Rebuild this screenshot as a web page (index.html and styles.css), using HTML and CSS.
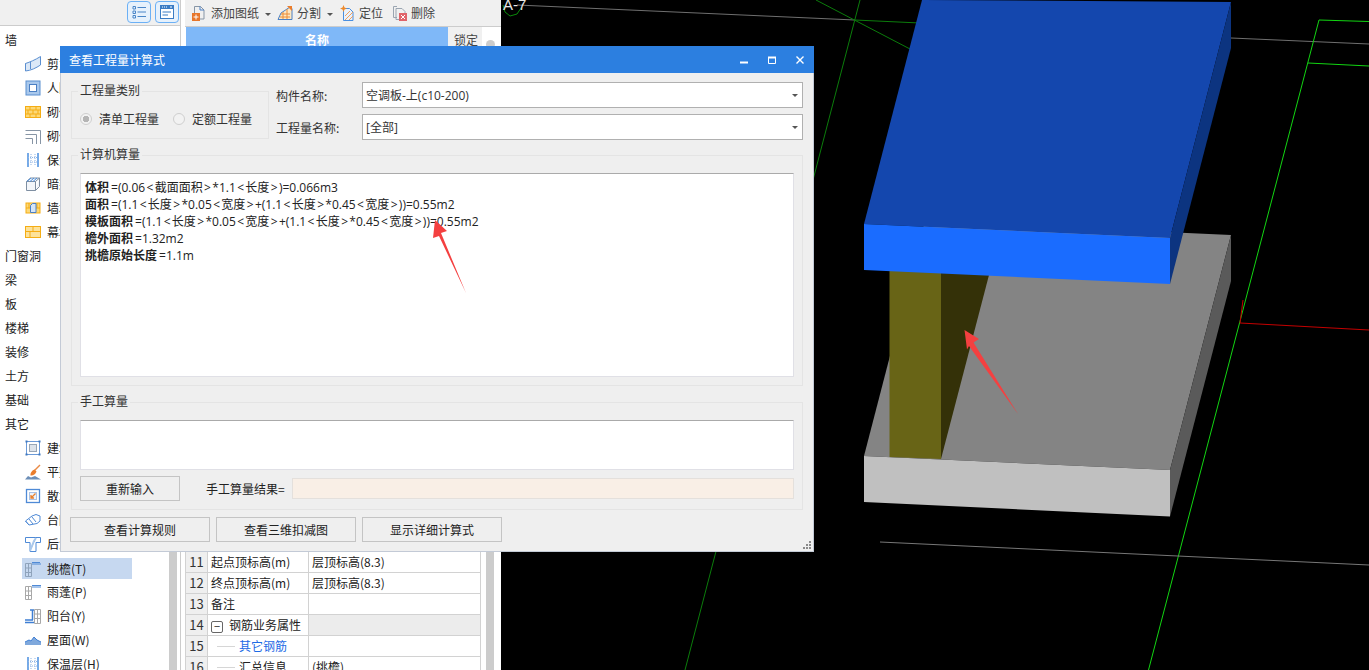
FILE: index.html
```html
<!DOCTYPE html>
<html lang="zh-CN">
<head>
<meta charset="utf-8">
<title>查看工程量计算式</title>
<link rel="stylesheet" href="styles.css">
</head>
<body>
<div class="app">
  <aside class="left">
    <section class="tree-col">
      <div class="tree-bar">
        <span class="tool-btn"><svg viewBox="0 0 16 16" width="16" height="16"><path d="M2 2.5h2.5v2.500H2zM2 7h2.500v2.500H2zM2 11.500h2.500V14H2z" fill="none" stroke="#4a86c8"/><path d="M6.500 3.500H15M6.500 8H15M6.500 12.500H15" stroke="#4a86c8"/></svg></span>
        <span class="tool-btn"><svg viewBox="0 0 16 16" width="18" height="16"><rect x="1.500" y="1.500" width="13" height="13" fill="#fff" stroke="#3b7cc4"/><path d="M1 1h14v4H1z" fill="#3b7cc4"/><path d="M3 3h1M5 3h1M7 3h1M11 3h2" stroke="#fff"/><path d="M3.500 8H12M3.500 11H9" stroke="#3b7cc4"/></svg></span>
      </div>
      <div class="tree-wrap">
        <ul class="tree">
          <li class="top">墙</li>
          <li class="leaf"><svg class="ic" viewBox="0 0 16 16"><path d="M.5 7.500C5 6 10 4 15.500.5V9C11 12 6 14.500.5 15z" fill="#dbe8f7" stroke="#5b8fd0"/><path d="M.5 7.500V15M5.500 6V13" stroke="#5b8fd0"/></svg>剪力墙(Q)</li>
          <li class="leaf"><svg class="ic" viewBox="0 0 16 16"><rect x="1" y="1" width="14" height="14" fill="#a9c8ec" stroke="#5b8fd0"/><rect x="4.500" y="4.500" width="7" height="7" fill="#fff" stroke="#4a7fc4"/></svg>人防门框墙(RF)</li>
          <li class="leaf"><svg class="ic" viewBox="0 0 16 16"><rect x=".5" y="2.500" width="15" height="11" fill="#fcd877" stroke="#f5ad14"/><path d="M.5 6h15M.5 10h15M5 2.500V6M11 2.500V6M8 6v4M3 6v4M13 6v4M5 10v3.500M11 10v3.500" stroke="#f5ad14"/></svg>砌体墙(Q)</li>
          <li class="leaf"><svg class="ic" viewBox="0 0 16 16"><path d="M.5 2.500h15V16M.5 6.500h11V16M.5 10.500h7V16" fill="none" stroke="#8795a5"/></svg>砌体加筋(Y)</li>
          <li class="leaf"><svg class="ic" viewBox="0 0 16 16"><path d="M3 1v14M13 1v14" stroke="#4a8fe0" stroke-width="1.500"/><path d="M6 2v12M10 2v12M3 5.500h10M3 10h10" stroke="#8fb4e4" stroke-dasharray="1 1"/></svg>保温墙(Q)</li>
          <li class="leaf"><svg class="ic" viewBox="0 0 16 16"><path d="M1.500 5.500l4-3.500h9l-4 3.500zM1.500 5.500v9h9v-9M10.500 14.500l4-4V2" fill="#f3f6fa" stroke="#7f8fa2"/><path d="M6 2l-4 3.500M9 2L5 5.500M12 2L8 5.500" stroke="#4a8fe0"/></svg>暗梁(A)</li>
          <li class="leaf"><svg class="ic" viewBox="0 0 16 16"><rect x="1" y="3" width="14" height="10" fill="#fcd877" stroke="#f5ad14"/><path d="M1 8h14M4 3v5M12 3v5" stroke="#f5ad14"/><path d="M5.500 5.500l2-2h3.500v9H5.500z" fill="#d6e5f7" stroke="#4a7fc4"/></svg>墙垛(E)</li>
          <li class="leaf"><svg class="ic" viewBox="0 0 16 16"><rect x=".5" y="2.500" width="15" height="11" fill="#fde29a" stroke="#f5ad14"/><path d="M.5 7.500h15M8 2.500V7.500M5 7.500v6" stroke="#f5ad14"/></svg>幕墙(Q)</li>
          <li class="top">门窗洞</li>
          <li class="top">梁</li>
          <li class="top">板</li>
          <li class="top">楼梯</li>
          <li class="top">装修</li>
          <li class="top">土方</li>
          <li class="top">基础</li>
          <li class="top">其它</li>
          <li class="leaf"><svg class="ic" viewBox="0 0 16 16"><rect x="1.500" y="1.500" width="13" height="13" fill="#fff" stroke="#6b9ad8"/><rect x="4.500" y="4.500" width="7" height="7" fill="#dde3ea" stroke="#98a6b6"/><path d="M.5.500h2v2h-2zM13.500.500h2v2h-2zM.5 13.500h2v2h-2zM13.500 13.500h2v2h-2z" fill="#3f77bd"/></svg>建筑面积(P)</li>
          <li class="leaf"><svg class="ic" viewBox="0 0 16 16"><path d="M15 1l-6 6" stroke="#e98a45" stroke-width="1.500"/><path d="M9.500 5.500l2 2c-1 3-4 4.500-6 4 -.5-2 1-5 4-6z" fill="#ea7d2c"/><path d="M0 15.500l3-3.500 3 1.500 4-1.500 6 3.500z" fill="#6d8fb8"/></svg>平整场地(V)</li>
          <li class="leaf"><svg class="ic" viewBox="0 0 16 16"><rect x="1.500" y="1.500" width="13" height="13" fill="#fff" stroke="#4f8ad6" stroke-width="1.300"/><rect x="4.500" y="4.500" width="7" height="7" fill="#eef3fa" stroke="#a8c2e6"/><path d="M10.500 5.500L6 10M6 7v3h3" fill="none" stroke="#e77f2e" stroke-width="1.300"/></svg>散水(S)</li>
          <li class="leaf"><svg class="ic" viewBox="0 0 16 16"><path d="M.5 9L7 4l4-1.500 4 1.500v5l-3 2.500-8 1.500z" fill="#fff" stroke="#4f8ad6"/><path d="M4 7l4 5M7 5l4 5M.5 9l3.500 4" stroke="#4f8ad6"/></svg>台阶</li>
          <li class="leaf"><svg class="ic" viewBox="0 0 16 16"><path d="M.5 1.500h15v5H11v9H5v-9H.5z" fill="#fff" stroke="#4f8ad6"/><path d="M5 15L9 5l2-3" stroke="#a9c8ec" stroke-width="2"/></svg>后浇带(JD)</li>
          <li class="leaf sel"><svg class="ic" viewBox="0 0 16 16"><path d="M.5 2.500h6v13h-6zM.5 7h6M.5 11.500h6M3.500 2.500v13" fill="none" stroke="#8fa3bb"/><path d="M7 1.500h8M7 3h9" stroke="#4f8ad6"/></svg>挑檐(T)</li>
          <li class="leaf"><svg class="ic" viewBox="0 0 16 16"><path d="M.5 2.500h6v13h-6zM.5 7h6M.5 11.500h6M3.500 2.500v13" fill="none" stroke="#a8a8a8"/><path d="M7 1.500h9M7 3h9" stroke="#4f8ad6"/></svg>雨蓬(P)</li>
          <li class="leaf"><svg class="ic" viewBox="0 0 16 16"><path d="M9.500 1.500h6v14h-6zM9.500 6h6M9.500 10.500h6M12.500 1.500v14" fill="none" stroke="#a8a8a8"/><path d="M5 2h4M7.500 2v10M0 12h8M0 14.500h9" fill="none" stroke="#3f7fd4" stroke-width="1.500"/></svg>阳台(Y)</li>
          <li class="leaf"><svg class="ic" viewBox="0 0 16 16"><path d="M0 10l4-2 2 1 3-4 3 3 4 2v3H0z" fill="#7fa8dc"/><path d="M0 10l4-2 2 1 3-4 3 3 4 2" fill="none" stroke="#3f7fd4"/></svg>屋面(W)</li>
          <li class="leaf"><svg class="ic" viewBox="0 0 16 16"><path d="M3 1v14M13 1v14" stroke="#4a8fe0" stroke-width="1.500"/><path d="M6 2v12M10 2v12M3 5.500h10M3 10h10" stroke="#8fb4e4" stroke-dasharray="1 1"/></svg>保温层(H)</li>
        </ul>
        <div class="scroll"></div>
      </div>
    </section>
    <section class="prop-col">
      <div class="prop-bar">
        <span class="prop-tool"><svg class="ic" viewBox="0 0 16 16"><path d="M3.500 8V1.500h6l3.500 3.500v9H9" fill="none" stroke="#8795a5"/><path d="M9 1.500V5h4" fill="none" stroke="#4a7fc4"/><rect x="1" y="8" width="8" height="8" fill="#e8762a"/><path d="M5 9.500v5M2.500 12h5" stroke="#fff"/></svg>添加图纸</span>
        <span class="caret"></span>
        <span class="prop-tool tool-split"><svg class="ic" viewBox="0 0 16 16"><path d="M1 14.500L4 8l9-6 2 1.500v11z" fill="#fde7c2" stroke="#4a7fc4"/><path d="M4 9h9M3 12h10M6 14V7M10 14V4" stroke="#ec8d39"/><path d="M10 1h5v5z" fill="#ea7d2c"/></svg>分割</span>
        <span class="caret"></span>
        <span class="prop-tool tool-locate"><svg class="ic" viewBox="0 0 16 16"><path d="M3.500 3.500h6l3.500 3.500v8.500H3.500z" fill="#eaf2fb" stroke="#4a8fe0"/><path d="M5 15l8-8M5 11l5-5M9 15l4-4" stroke="#f0a060"/><path d="M3.500 0l1 2.500L7 3.500 4.500 4.500l-1 2.500-1-2.500L0 3.500 2.500 2.500z" fill="#ee8a2c"/></svg>定位</span>
        <span class="prop-tool tool-del"><svg class="ic" viewBox="0 0 16 16"><path d="M5 1.500H1.500v11H5M4 3.500h6l3 3V8" fill="none" stroke="#9aa5b1"/><path d="M4 3.500v11h3" fill="none" stroke="#9aa5b1"/><rect x="7" y="8" width="8" height="8" fill="#e0646a"/><path d="M9 10l4 4M13 10l-4 4" stroke="#fff"/></svg>删除</span>
      </div>
      <div class="prop-head"><span class="h-name">名称</span><span class="h-lock">锁定</span><span class="h-knob"></span></div>
      <div class="prop-body">
        <table class="props">
          <colgroup><col class="c-no"><col class="c-key"><col class="c-val"></colgroup>
          <tr><th>11</th><td>起点顶标高(m)</td><td>层顶标高(8.3)</td></tr>
          <tr><th>12</th><td>终点顶标高(m)</td><td>层顶标高(8.3)</td></tr>
          <tr><th>13</th><td>备注</td><td></td></tr>
          <tr class="grp"><th>14</th><td class="grp-key"><span class="minus">−</span>钢筋业务属性</td><td class="grp-val"></td></tr>
          <tr><th>15</th><td class="sub link"><span class="branch"></span>其它钢筋</td><td></td></tr>
          <tr><th>16</th><td class="sub"><span class="branch"></span>汇总信息</td><td>(挑檐)</td></tr>
        </table>
        <div class="scroll scroll-prop"></div>
      </div>
    </section>
  </aside>
  <main class="view">
    <svg class="scene" viewBox="501 0 868 670" width="868" height="670">
      <g fill="none">
        <path d="M517 5L855 20" stroke="#6f6f6f"/>
        <path d="M855 20L920 23" stroke="#0c7d0c"/>
        <path d="M1231 38L1369 44" stroke="#6f6f6f"/>
        <path d="M860 0L685 670" stroke="#0b7c0b"/>
        <path d="M816 0L910 49" stroke="#0b7c0b"/>
        <path d="M1369 21.500L1319 20L1148.500 670" stroke="#12d512"/>
        <path d="M1308 63L1369 66" stroke="#12d512"/>
        <path d="M1243 300L1240 323L1369 330" stroke="#c40000"/>
        <path d="M880 542L1369 565" stroke="#777"/>
        <path d="M503 5L505 12L510 16L517 14L521 8" stroke="#0b8a0b"/>
      </g>
      <text class="axis" x="503" y="10">A-7</text>
      <polygon points="925,221 1231,235 1170,470 864,456" fill="#848484"/>
      <polygon points="864,456 1170,470 1170,516.500 864,502" fill="#c0c0c0"/>
      <polygon points="1231,235 1231,281 1170,516.500 1170,470" fill="#5a5a5a"/>
      <polygon points="941,272 989,275 941,459" fill="#343108"/>
      <polygon points="889.500,270 941,272 941,459 889.500,457" fill="#686416"/>
      <polygon points="922,0 1231,2 1170,238 864,224" fill="#1447ae"/>
      <polygon points="864,224 1170,238 1170,284 864,270" fill="#1a6cff"/>
      <polygon points="1231,2 1231,48 1170,284 1170,238" fill="#0c3480"/>
      <polygon points="964.500,330 979,339 973.500,342.500 1018,414 969,346 967,349.500" fill="#f44040"/>
    </svg>
  </main>
  <div class="dialog">
    <header class="title">
      <span class="title-text">查看工程量计算式</span>
      <span class="win-btns">
        <svg viewBox="0 0 8 8" width="8" height="8"><path d="M0 5.500h8v2H0z" fill="#fff"/></svg>
        <svg viewBox="0 0 8 8" width="8" height="8"><path d="M.5 1.500h7v6h-7z" fill="none" stroke="#fff"/><path d="M0 .5h8v2H0z" fill="#fff"/></svg>
        <svg viewBox="0 0 8 8" width="8" height="8"><path d="M.5.500l7 7M7.500.500l-7 7" stroke="#fff" stroke-width="1.400"/></svg>
      </span>
    </header>
    <div class="dlg-body">
      <div class="top-row">
        <div class="group group-kind">
          <div class="legend">工程量类别</div>
          <div class="radios">
            <label class="radio"><span class="dot on"></span>清单工程量</label>
            <label class="radio"><span class="dot"></span>定额工程量</label>
          </div>
        </div>
        <div class="fields">
          <div class="field"><span class="f-label">构件名称:</span><span class="select">空调板-上(c10-200)</span></div>
          <div class="field"><span class="f-label">工程量名称:</span><span class="select">[全部]</span></div>
        </div>
      </div>
      <div class="group group-calc">
        <div class="legend">计算机算量</div>
        <div class="box box-calc">
          <p><b>体积</b>=(0.06<i>&lt;</i>截面面积<i>&gt;</i>*1.1<i>&lt;</i>长度<i>&gt;</i>)=0.066m3</p>
          <p><b>面积</b>=(1.1<i>&lt;</i>长度<i>&gt;</i>*0.05<i>&lt;</i>宽度<i>&gt;</i>+(1.1<i>&lt;</i>长度<i>&gt;</i>*0.45<i>&lt;</i>宽度<i>&gt;</i>))=0.55m2</p>
          <p><b>模板面积</b>=(1.1<i>&lt;</i>长度<i>&gt;</i>*0.05<i>&lt;</i>宽度<i>&gt;</i>+(1.1<i>&lt;</i>长度<i>&gt;</i>*0.45<i>&lt;</i>宽度<i>&gt;</i>))=0.55m2</p>
          <p><b>檐外面积</b>=1.32m2</p>
          <p><b>挑檐原始长度</b>=1.1m</p>
        </div>
      </div>
      <div class="group group-hand">
        <div class="legend">手工算量</div>
        <div class="box box-hand"></div>
        <div class="hand-row">
          <button class="btn btn-re">重新输入</button>
          <span class="hand-label">手工算量结果=</span>
          <span class="result"></span>
        </div>
      </div>
      <div class="actions">
        <button class="btn btn-act">查看计算规则</button>
        <button class="btn btn-act">查看三维扣减图</button>
        <button class="btn btn-act">显示详细计算式</button>
      </div>
    </div>
    <svg class="grip" viewBox="0 0 8 8" width="8" height="8"><path d="M6 0h2v2H6zM3 3h2v2H3zM6 3h2v2H6zM0 6h2v2H0zM3 6h2v2H3zM6 6h2v2H6z" fill="#8a8a8a"/></svg>
  </div>
</div>
<svg class="callout" viewBox="0 0 60 90" width="60" height="90"><polygon points="15,2 27,13 21,15 46,75 19,18 13,20" fill="#f44040"/></svg>
</body>
</html>
```

FILE: styles.css
```css
* { box-sizing: border-box; }
html, body { margin: 0; height: 100%; }
body {
  background: #000;
  color: #222;
  font: 12px/16px "Noto Sans CJK SC", "Noto Sans", sans-serif;
  overflow: hidden;
  position: relative;
}
.app { display: flex; height: 670px; width: 1369px; position: relative; overflow: hidden; }

.left { width: 501px; flex: none; display: flex; background: #fff; height: 670px; overflow: hidden; }
.tree-col { width: 181px; flex: none; border-right: 1px solid #ccc; }
.tree-bar {
  height: 26px;
  background: #f0f0f0;
  border-bottom: 1px solid #ccc;
  display: flex;
  justify-content: flex-end;
  gap: 4px;
  padding: 1px 1px 2px 0;
}
.tool-btn {
  width: 24px;
  height: 22px;
  background: #e6f1fc;
  border: 1px solid #6bb0f5;
  border-radius: 4px;
  display: flex;
  align-items: center;
  justify-content: center;
}
.tree-wrap { display: flex; height: 644px; }
.tree { list-style: none; margin: 2px 0 0; padding: 0; width: 169px; flex: none; }
.tree li { height: 24px; display: flex; align-items: center; color: #222; white-space: nowrap; }
.top { padding-left: 5px; }
.leaf { padding-left: 25px; }
.ic { width: 16px; height: 16px; flex: none; margin-right: 6px; }
.sel { margin: 2px 0 1px 22px; width: 110px; padding-left: 3px; background: #c6d8f0; height: 21px !important; }
.scroll { width: 8px; margin-top: 30px; background: #ccc; }

.prop-col { margin-left: 4px; width: 316px; flex: none; }
.prop-bar {
  height: 27px;
  background: #f0f0f0;
  border-bottom: 1px solid #ccc;
  display: flex;
  align-items: center;
  padding-left: 6px;
  color: #444;
}
.prop-tool { display: flex; align-items: center; }
.prop-tool .ic { margin-right: 4px; }
.caret { width: 0; height: 0; margin: 2px 0 0 6px; border: 3px solid transparent; border-top: 3px solid #555; border-bottom: 0; }
.tool-split { margin-left: 6px; }
.tool-locate { margin-left: 7px; }
.tool-locate .ic { margin-right: 3px; }
.tool-del { margin-left: 9px; }
.tool-del .ic { margin-right: 3px; }
.prop-head { display: flex; height: 20px; align-items: center; }
.h-name {
  width: 262px;
  margin-left: 1px;
  height: 20px;
  background: #7fb8f8;
  color: #fff;
  font-weight: 700;
  text-align: center;
  line-height: 26px;
}
.h-lock { width: 34px; height: 20px; background: #f0f0f0; padding-left: 6px; line-height: 26px; color: #444; }
.h-knob { width: 9px; height: 9px; border-radius: 50%; background: #ccc; margin: 15px 0 0 4px; }
.prop-body { display: flex; margin-top: 504px; }
.props { border-collapse: collapse; table-layout: fixed; width: 295px; flex: none; }
.c-no { width: 22px; }
.c-key { width: 101px; }
.c-val { width: 172px; }
.props tr { height: 21px; }
.props th, .props td { border: 1px solid #d2d2d2; padding: 0 0 0 3px; font-weight: 400; white-space: nowrap; overflow: hidden; }
.props th { background: #efefef; text-align: center; padding: 0; font-size: 13px; color: #333; }
.grp-key { position: relative; }
.grp-val { background: #ececec; }
.minus {
  display: inline-block;
  width: 12px;
  height: 12px;
  border: 1px solid #666;
  border-radius: 2px;
  line-height: 9px;
  text-align: center;
  margin-right: 6px;
  font-size: 11px;
  vertical-align: -1px;
}
.sub { padding-left: 9px !important; }
.branch { display: inline-block; width: 18px; height: 1px; background: #d6d6d6; margin-right: 4px; vertical-align: 4px; }
.link { color: #1d6ae5; }
.scroll-prop { margin: 0 0 0 5px; height: 120px; }

.view { flex: 1; background: #000; height: 670px; overflow: hidden; }
.scene { display: block; }
.axis { fill: #e8e8e8; font: 15px "Liberation Sans", sans-serif; }

.dialog {
  position: absolute;
  left: 60px;
  top: 46px;
  width: 754px;
  height: 506px;
  background: #efefef;
  border: 1px solid #c3cad6;
  border-top: 0;
}
.title {
  height: 27px;
  margin: 0 -1px;
  background: #2c7fe0;
  color: #fff;
  display: flex;
  align-items: center;
  justify-content: space-between;
  padding: 0 10px 0 9px;
}
.win-btns { display: flex; gap: 20px; }
.dlg-body { padding: 9px 10px 0; }
.top-row { display: flex; gap: 7px; height: 58px; }
.group { border: 1px solid #e4e4e4; }
.legend {
  width: fit-content;
  background: #efefef;
  padding: 0 2px;
  margin: -10px 0 0 6px;
  height: 16px;
  color: #333;
}
.group-kind { width: 198px; height: 48px; margin-top: 9px; }
.radios { display: flex; padding: 13px 0 0 8px; }
.radio { display: flex; align-items: center; width: 93px; color: #333; }
.dot {
  width: 12px;
  height: 12px;
  border: 1px solid #cfcfcf;
  border-radius: 50%;
  margin-right: 7px;
  background: #f2f2f2;
  flex: none;
}
.dot.on { background: radial-gradient(circle, #b5b5b5 0 3px, #f2f2f2 3.500px); }
.fields { flex: 1; display: flex; flex-direction: column; gap: 6px; }
.field { display: flex; align-items: center; height: 26px; }
.f-label { width: 86px; flex: none; color: #333; padding-top: 2px; }
.select {
  flex: 1;
  height: 26px;
  background: #fff;
  border: 1px solid #b0b0b0;
  padding-left: 3px;
  line-height: 26px;
  color: #333;
  position: relative;
  font-family: "Open Sans", "Noto Sans CJK SC", sans-serif;
}
.select::after {
  content: "";
  position: absolute;
  right: 4px;
  top: 11px;
  border: 3px solid transparent;
  border-top: 3px solid #555;
  border-bottom: 0;
}
.group-calc, .group-hand { padding: 0 8px; }
.group-calc .legend, .group-hand .legend { margin-left: -2px; }
.group-calc { margin-top: 15px; height: 231px; }
.box { background: #fff; border: 1px solid #e0e0e6; border-top-color: #aaa; }
.box-calc {
  height: 204px;
  margin-top: 11px;
  padding: 4px 4px;
  color: #222;
  font-family: "Open Sans", "Noto Sans CJK SC", sans-serif;
}
.box-calc p { margin: 0; white-space: nowrap; height: 17px; line-height: 17px; }
.box-calc b { font-weight: 700; font-family: "Noto Sans CJK SC", sans-serif; padding-right: 2px; }
.box-calc i { font-style: normal; padding: 0 1.350px; }
.group-hand { margin-top: 16px; height: 108px; }
.box-hand { height: 50px; margin-top: 11px; }
.hand-row { display: flex; align-items: center; margin-top: 6px; }
.btn {
  font: inherit;
  color: #222;
  background: #efefef;
  border: 1px solid #c4c4c4;
  height: 25px;
  padding: 0;
}
.btn-re { width: 100px; }
.hand-label { margin-left: 26px; width: 86px; flex: none; color: #222; }
.result { flex: 1; height: 21px; background: #f9efe6; border: 1px solid #e4e0dc; }
.actions { display: flex; gap: 6px; margin-top: 7px; margin-left: -1px; }
.btn-act { width: 140px; }
.grip { position: absolute; right: 2px; bottom: 2px; }
.callout { position: absolute; left: 420px; top: 218px; }
```
